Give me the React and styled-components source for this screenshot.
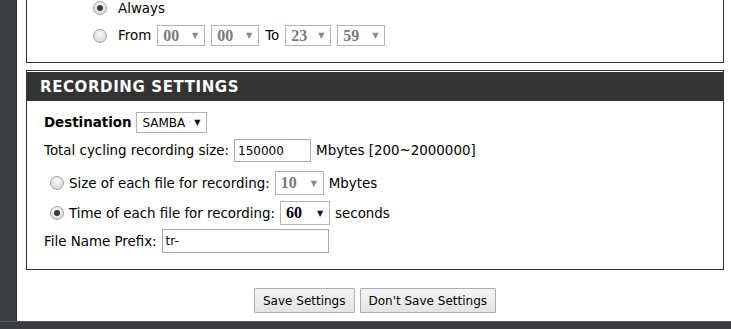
import React from 'react';
import styled, { createGlobalStyle } from 'styled-components';

const GlobalStyle = createGlobalStyle`
  html, body {
    margin: 0;
    padding: 0;
    background: #fff;
  }
  body {
    font-family: "DejaVu Sans", Verdana, sans-serif;
    color: #000;
  }
`;

const Page = styled.div`
  width: 731px;
  height: 329px;
  display: flex;
  flex-direction: column;
  overflow: hidden;
`;

const Main = styled.div`
  flex: 1;
  display: flex;
  min-height: 0;
`;

const SideBar = styled.div`
  width: 16px;
  background: #3d3f42;
  border-right: 1px solid #2c2d2f;
`;

const Content = styled.div`
  flex: 1;
  padding: 0 7px 0 9px;
  display: flex;
  flex-direction: column;
  min-height: 0;
`;

const Footer = styled.div`
  height: 7px;
  background: #3a3c3f;
  border-top: 1px solid #55575a;
`;

const Box = styled.div`
  border: 1px solid #333;
  border-top: ${p => (p.$cut ? 'none' : '1px solid #333')};
  margin-top: ${p => p.$mt || '0'};
  display: flex;
  flex-direction: column;
`;

const Header = styled.div`
  margin-top: 1px;
  height: 29px;
  background: #333;
  color: #fff;
  font-family: "DejaVu Sans", Verdana, sans-serif;
  font-weight: bold;
  font-size: 15px;
  letter-spacing: 0.6px;
  display: flex;
  align-items: center;
  padding-left: 13px;
`;

const Body = styled.div`
  padding: ${p => p.$pad || '0 17px 16px'};
  display: flex;
  flex-direction: column;
`;

const Row = styled.div`
  display: flex;
  align-items: center;
  gap: ${p => p.$gap || '5px'};
  padding-left: ${p => p.$indent || '0'};
  margin-top: ${p => p.$mt || '0'};
  height: ${p => p.$h || 'auto'};
`;

const Label = styled.span`
  font-size: 13.4px;
  font-weight: ${p => (p.$bold ? 'bold' : 'normal')};
  white-space: nowrap;
  margin-left: ${p => p.$ml || '0'};
`;

const Radio = styled.span`
  width: 14px;
  height: 14px;
  border-radius: 50%;
  box-sizing: border-box;
  border: 1px solid #a4a4a4;
  background: radial-gradient(circle at 50% 35%, #fafafa 0%, #dcdcdc 70%, #cfcfcf 100%);
  display: inline-flex;
  align-items: center;
  justify-content: center;
  flex-shrink: 0;
  &::after {
    content: '';
    width: 6px;
    height: 6px;
    border-radius: 50%;
    background: ${p => (p.$on ? '#3a3a3a' : 'transparent')};
  }
`;

const Select = styled.span`
  display: inline-flex;
  align-items: center;
  justify-content: space-between;
  box-sizing: border-box;
  height: 100%;
  width: ${p => p.$w};
  padding: 0 6px 0 5px;
  border: 1px solid #b3b3b3;
  background: #fff;
  color: ${p => (p.$disabled ? '#7a7a7a' : '#000')};
  font-family: ${p => (p.$serif ? '"Liberation Serif", "Times New Roman", serif' : '"DejaVu Sans", Verdana, sans-serif')};
  font-weight: ${p => (p.$serif ? 'bold' : 'normal')};
  font-size: ${p => (p.$serif ? '16px' : '12px')};
  white-space: nowrap;
`;

const Arrow = styled.span`
  font-family: "DejaVu Sans", sans-serif;
  font-size: 8px;
  font-weight: normal;
  color: ${p => (p.$disabled ? '#8a8a8a' : '#111')};
  margin-left: 6px;
`;

const Input = styled.span`
  display: inline-flex;
  align-items: center;
  box-sizing: border-box;
  height: 100%;
  width: ${p => p.$w};
  border: 1px solid #a9a9a9;
  padding-left: 3px;
  font-size: 12px;
  background: #fff;
`;

const ButtonBar = styled.div`
  display: flex;
  justify-content: center;
  gap: 5px;
  padding-top: 18px;
`;

const Button = styled.button`
  height: 25px;
  box-sizing: border-box;
  padding: 0 8px;
  border: 1px solid #adadad;
  background: linear-gradient(#f4f4f4, #e4e4e4);
  font-family: "DejaVu Sans", Verdana, sans-serif;
  font-size: 12px;
  color: #000;
  border-radius: 1px;
`;

function Sel({ value, w, serif, disabled }) {
  return (
    <Select $w={w} $serif={serif} $disabled={disabled}>
      {value}
      <Arrow $disabled={disabled}>▼</Arrow>
    </Select>
  );
}

export default function App() {
  return (
    <Page>
      <GlobalStyle />
      <Main>
        <SideBar />
        <Content>
          <Box $cut>
            <Body $pad="0 0 16px 66px">
              <Row $gap="11px" $h="16px">
                <Radio $on />
                <Label>Always</Label>
              </Row>
              <Row $gap="6px" $h="21px" $mt="9px">
                <Radio />
                <Label $ml="5px">From</Label>
                <Sel value="00" w="48px" serif disabled />
                <Sel value="00" w="48px" serif disabled />
                <Label>To</Label>
                <Sel value="23" w="46px" serif disabled />
                <Sel value="59" w="48px" serif disabled />
              </Row>
            </Body>
          </Box>
          <Box $mt="7px">
            <Header>RECORDING SETTINGS</Header>
            <Body>
              <Row $h="21px" $mt="11px">
                <Label $bold>Destination</Label>
                <Sel value="SAMBA" w="71px" />
              </Row>
              <Row $h="23px" $mt="6px">
                <Label>Total cycling recording size:</Label>
                <Input $w="77px">150000</Input>
                <Label>Mbytes [200~2000000]</Label>
              </Row>
              <Row $h="24px" $mt="9px" $indent="6px">
                <Radio />
                <Label>Size of each file for recording:</Label>
                <Sel value="10" w="49px" serif disabled />
                <Label>Mbytes</Label>
              </Row>
              <Row $h="24px" $mt="6px" $indent="6px">
                <Radio $on />
                <Label>Time of each file for recording:</Label>
                <Sel value="60" w="50px" serif />
                <Label>seconds</Label>
              </Row>
              <Row $h="24px" $mt="4px">
                <Label>File Name Prefix:</Label>
                <Input $w="167px">tr-</Input>
              </Row>
            </Body>
          </Box>
          <ButtonBar>
            <Button>Save Settings</Button>
            <Button>Don't Save Settings</Button>
          </ButtonBar>
        </Content>
      </Main>
      <Footer />
    </Page>
  );
}
